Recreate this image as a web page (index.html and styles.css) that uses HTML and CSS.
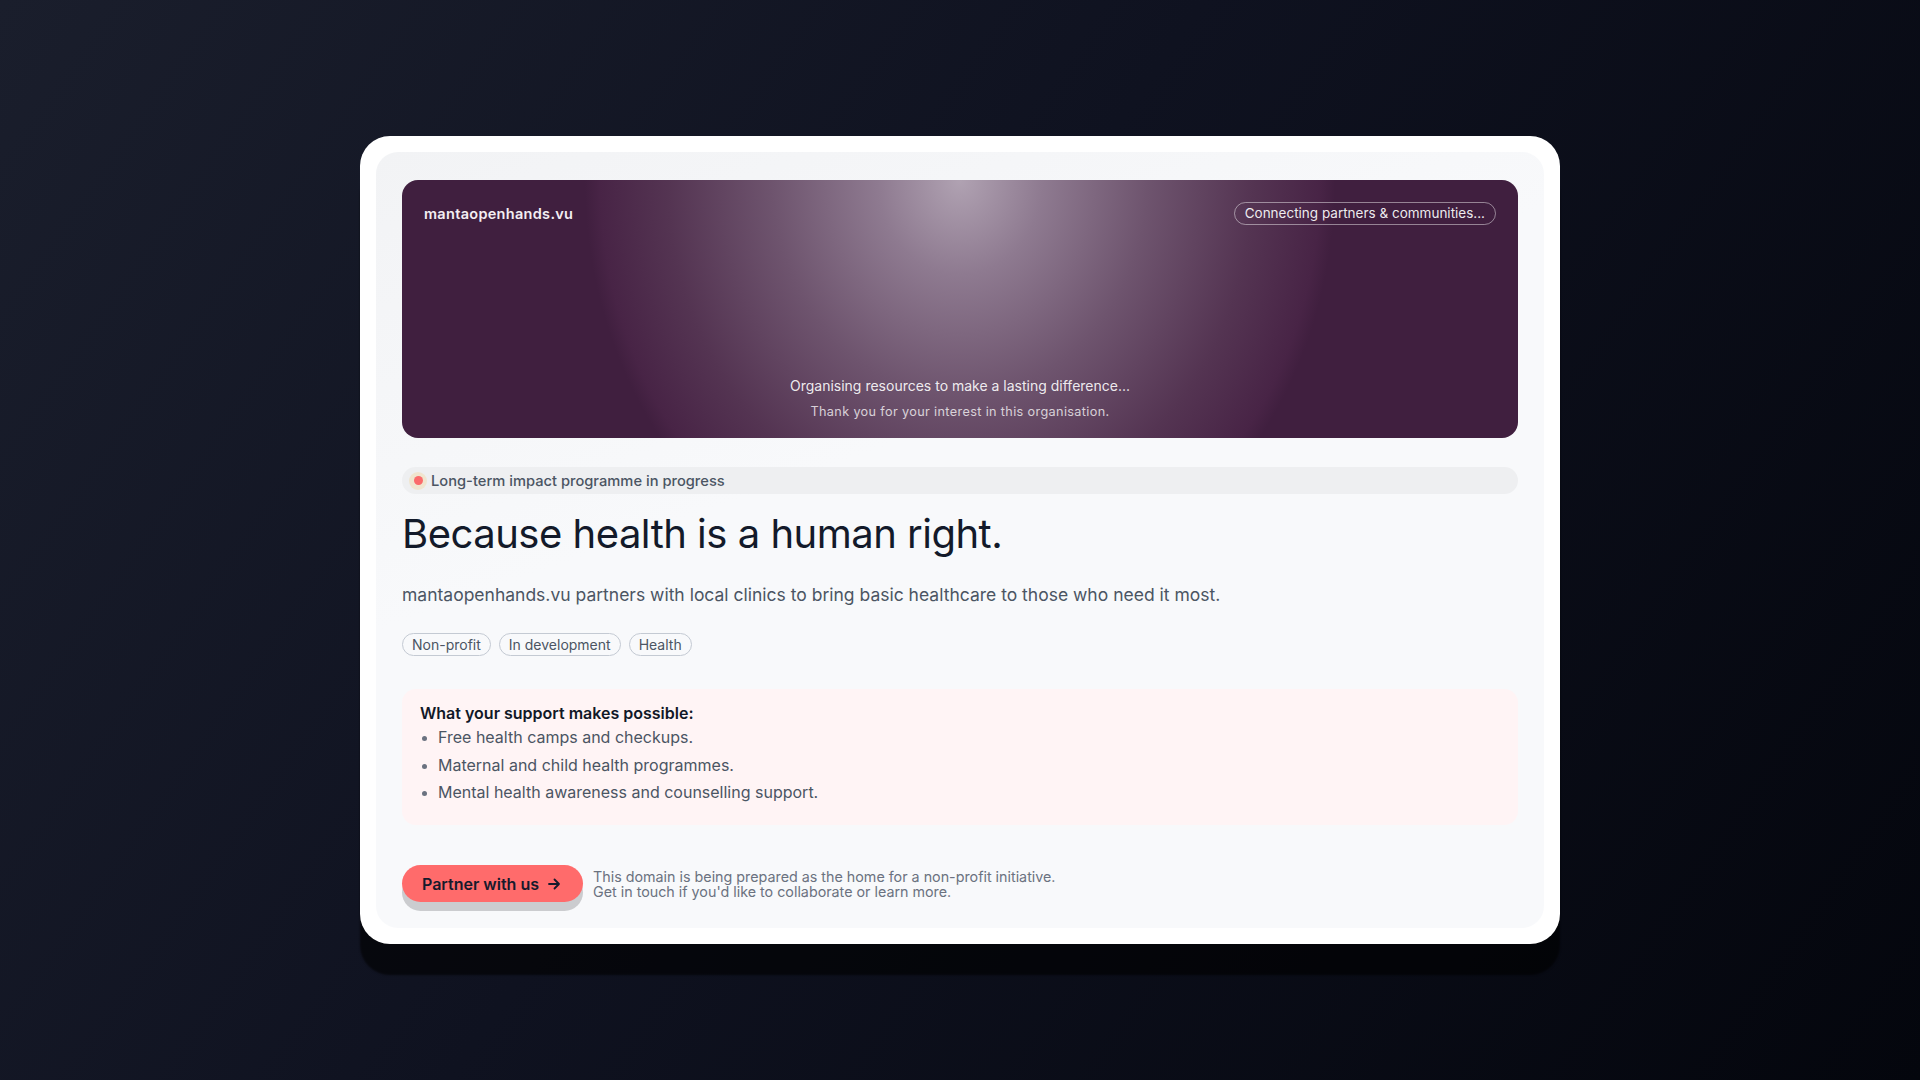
FILE: index.html
```html
<!DOCTYPE html>
<html lang="en">
<head>
<meta charset="utf-8">
<title>mantaopenhands.vu</title>
<link rel="stylesheet" href="styles.css">
</head>
<body>
<div class="stage">
  <div class="card">
    <div class="panel">
      <section class="hero">
        <div class="hero-top">
          <span class="domain">mantaopenhands.vu</span>
          <span class="hero-pill">Connecting partners &amp; communities...</span>
        </div>
        <div class="hero-bottom">
          <p class="hero-line">Organising resources to make a lasting difference...</p>
          <p class="hero-sub">Thank you for your interest in this organisation.</p>
        </div>
      </section>

      <div class="status"><span class="dot"></span>Long-term impact programme in progress</div>

      <h1 class="title">Because health is a human right.</h1>
      <p class="lead">mantaopenhands.vu partners with local clinics to bring basic healthcare to those who need it most.</p>

      <div class="tags">
        <span class="tag">Non-profit</span>
        <span class="tag">In development</span>
        <span class="tag">Health</span>
      </div>

      <div class="support">
        <div class="support-title">What your support makes possible:</div>
        <ul class="support-list">
          <li>Free health camps and checkups.</li>
          <li>Maternal and child health programmes.</li>
          <li>Mental health awareness and counselling support.</li>
        </ul>
      </div>

      <div class="cta-row">
        <a class="cta" href="#">Partner with us
          <svg class="arrow" width="14" height="14" viewBox="0 0 14 14" fill="none" stroke="currentColor" stroke-width="1.8" stroke-linecap="round" stroke-linejoin="round"><path d="M2 7h10M7.5 2.5 12 7l-4.5 4.5"/></svg>
        </a>
        <p class="note">This domain is being prepared as the home for a non-profit initiative.<br>Get in touch if you'd like to collaborate or learn more.</p>
      </div>
    </div>
  </div>
</div>
</body>
</html>
```

FILE: styles.css
```css
* { box-sizing: border-box; }
html, body { margin: 0; padding: 0; }
body {
  width: 1920px;
  height: 1080px;
  overflow: hidden;
  font-family: "Inter", "Noto Sans", sans-serif;
  background: linear-gradient(125deg, #1a1e2c 0%, #0f1220 45%, #04060d 100%);
}
.stage {
  width: 1920px;
  height: 1080px;
  display: flex;
  align-items: center;
  justify-content: center;
}
.card {
  width: 1200px;
  background: #ffffff;
  border-radius: 30px;
  padding: 16px;
  box-shadow: 0 31px 2px rgba(0, 0, 0, 0.6);
}
.panel {
  background: linear-gradient(160deg, #f2f3f5 0%, #f8f9fb 40%, #f8f9fb 100%);
  border-radius: 22px;
  padding: 28px 26px 26px;
}
.hero {
  height: 258px;
  border-radius: 16px;
  padding: 22px 22px 18px 22px;
  display: flex;
  flex-direction: column;
  justify-content: space-between;
  color: #fff;
  background:
    radial-gradient(ellipse 375px 430px at 50% 0%,
      rgba(176, 162, 178, 1) 0%,
      rgba(142, 122, 144, 1) 22%,
      rgba(110, 84, 110, 1) 50%,
      rgba(84, 52, 82, 1) 78%,
      rgba(72, 36, 70, 1) 96%,
      rgba(64, 31, 63, 0) 100%),
    #401f3f;
}
.hero-top {
  display: flex;
  justify-content: space-between;
  align-items: center;
}
.domain {
  font-size: 14.5px;
  font-weight: 600;
  letter-spacing: 0.3px;
  color: #f3eef3;
}
.hero-pill {
  font-size: 13.5px;
  line-height: 21px;
  padding: 0 10px;
  border: 1px solid rgba(255, 255, 255, 0.45);
  border-radius: 999px;
  color: rgba(255, 255, 255, 0.92);
}
.hero-bottom { text-align: center; }
.hero-line {
  margin: 0;
  font-size: 14px;
  line-height: 20px;
  color: rgba(255, 255, 255, 0.9);
}
.hero-sub {
  margin: 8px 0 0;
  font-size: 12.7px;
  line-height: 16px;
  letter-spacing: 0.35px;
  color: rgba(255, 255, 255, 0.75);
}
.status {
  margin-top: 29px;
  height: 27px;
  border-radius: 999px;
  background: #eeeff1;
  display: flex;
  align-items: center;
  padding-left: 7px;
  font-size: 14.7px;
  font-weight: 500;
  color: #4b5563;
}
.dot {
  width: 18px;
  height: 18px;
  border-radius: 50%;
  background: #f0e5cf;
  margin-right: 4px;
  display: flex;
  align-items: center;
  justify-content: center;
}
.dot::after {
  content: "";
  width: 9px;
  height: 9px;
  border-radius: 50%;
  background: #fb6b6b;
}
.title {
  margin: 16px 0 0;
  font-size: 40px;
  line-height: 48px;
  font-weight: 400;
  letter-spacing: -0.5px;
  color: #131a2a;
}
.lead {
  margin: 23px 0 0;
  font-size: 17.5px;
  line-height: 27px;
  color: #4b5563;
}
.tags {
  display: flex;
  gap: 8px;
  margin-top: 25px;
}
.tag {
  font-size: 14px;
  line-height: 21px;
  padding: 0 9px;
  border: 1px solid #c4cad3;
  border-radius: 999px;
  color: #4b5563;
}
.support {
  margin-top: 33px;
  background: #fff4f5;
  border-radius: 14px;
  padding: 12px 18px 21px;
}
.support-title {
  font-size: 16px;
  line-height: 24px;
  font-weight: 600;
  color: #111827;
}
.support-list {
  margin: 0;
  padding-left: 18px;
  font-size: 16px;
  line-height: 24px;
  color: #4b5563;
}
.support-list li + li { margin-top: 3.5px; }
.support-list li::marker { color: #6b7280; font-size: 14px; }
.cta-row {
  margin-top: 40px;
  display: flex;
  align-items: center;
  gap: 10px;
}
.cta {
  display: inline-flex;
  align-items: center;
  gap: 8px;
  height: 37px;
  padding: 0 22px 0 20px;
  border-radius: 999px;
  background: #ff6b6b;
  color: #161a2c;
  font-size: 16px;
  font-weight: 600;
  text-decoration: none;
  box-shadow: 0 9px 0 #cbcccf;
}
.arrow { display: block; }
.note {
  margin: 0;
  font-size: 14.3px;
  line-height: 15px;
  color: #6b7280;
}
```
